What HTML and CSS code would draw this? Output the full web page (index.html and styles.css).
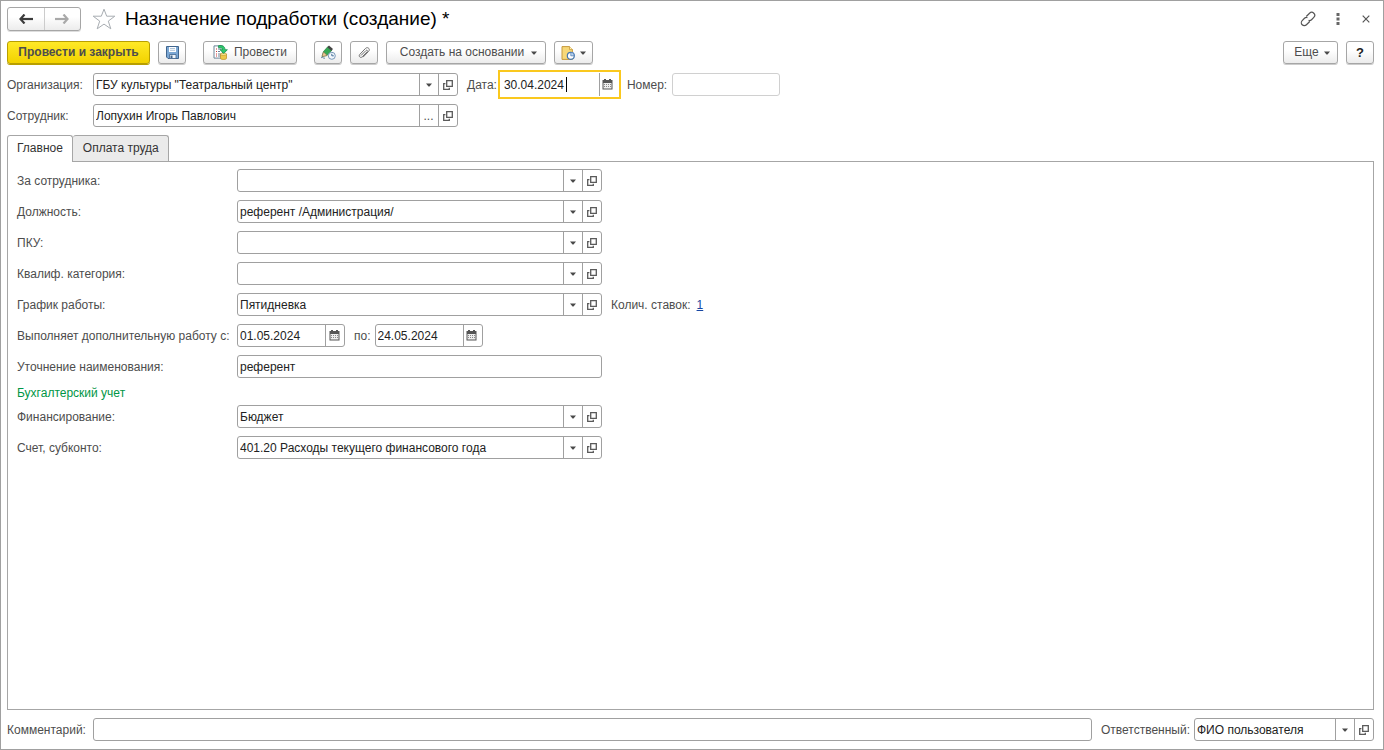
FILE: index.html
```html
<!DOCTYPE html>
<html lang="ru">
<head>
<meta charset="utf-8">
<title>Назначение подработки (создание) *</title>
<link rel="stylesheet" href="styles.css">
</head>
<body>
<svg class="sprite" aria-hidden="true">
  <symbol id="i-down" viewBox="0 0 8 6"><path d="M1 1.500h6L4.500 4.500h-1z" fill="#4a4a4a"/></symbol>
  <symbol id="i-open" viewBox="0 0 10 10"><path d="M3.700.700h5.600v5.600H3.700z" fill="none" stroke="#5a5a5a" stroke-width="1.300"/><path d="M2.400 3.700H.700v5.600h5.600V7.700" fill="none" stroke="#5a5a5a" stroke-width="1.300"/></symbol>
  <symbol id="i-cal" viewBox="0 0 11 11"><path d="M2 0h2v1h3V0h2v1h1.500v9.500H.500V1H2z" fill="#555"/><path d="M1.500 4h8v5.500h-8z" fill="#eee"/><path d="M2 5.500h7M2 7.500h7" stroke="#888" stroke-width="1" stroke-dasharray="1 1"/></symbol>
</svg>
<main class="window">
  <header class="titlebar">
    <div class="history">
      <button type="button" aria-label="Назад"><svg width="14" height="10" viewBox="0 0 14 10"><path d="M14 5H3" fill="none" stroke="#3c3c3c" stroke-width="2.200"/><path d="M5.500.500L1.500 5l4 4.500" fill="none" stroke="#3c3c3c" stroke-width="2.200"/></svg></button>
      <button type="button" aria-label="Вперед"><svg width="14" height="10" viewBox="0 0 14 10"><path d="M0 5H11" fill="none" stroke="#a9a9a9" stroke-width="2.200"/><path d="M8.500.500l4 4.500-4 4.500" fill="none" stroke="#a9a9a9" stroke-width="2.200"/></svg></button>
    </div>
    <button type="button" class="plain star" aria-label="В избранное"><svg width="24" height="22" viewBox="0 0 24 22"><path d="M12 1.200l2.700 7h8.100l-6.500 4.900 2.500 7.700-6.800-4.700-6.800 4.700 2.500-7.700L1.200 8.200h8.100z" fill="#fff" stroke="#a8adb2"/></svg></button>
    <h1>Назначение подработки (создание) *</h1>
    <div class="window-tools">
      <button type="button" class="plain" aria-label="Ссылка"><svg width="16" height="16" viewBox="0 0 16 16"><g transform="rotate(-45 8 8)" fill="none" stroke="#555" stroke-width="1.200"><path d="M7.500 11H2.800a3 3 0 0 1 0-6H6a3 3 0 0 1 2.600 1.600M8.500 5h4.700a3 3 0 0 1 0 6H10a3 3 0 0 1-2.600-1.600"/></g></svg></button>
      <button type="button" class="plain" aria-label="Меню"><svg width="4" height="12" viewBox="0 0 4 12"><path d="M.500 0h3v3h-3zM.500 4.500h3v3h-3zM.500 9h3v3h-3z" fill="#666"/></svg></button>
      <button type="button" class="plain" aria-label="Закрыть"><svg width="8" height="8" viewBox="0 0 8 8"><path d="M.700.700l6.600 6.600M7.300.700L.700 7.300" stroke="#555" stroke-width="1.200"/></svg></button>
    </div>
  </header>

  <div class="toolbar">
    <div class="tools">
      <button type="button" class="btn primary">Провести и закрыть</button>
      <button type="button" class="btn icon" aria-label="Записать"><svg width="13" height="13" viewBox="0 0 13 13"><path d="M.500.500h12v12H2l-1.500-1.500z" fill="#7ba7d4" stroke="#41668f"/><path d="M3 1h7v5H3z" fill="#fff"/><path d="M4 2.500h5M4 4.300h5" stroke="#9bb4ce" stroke-width=".8"/><path d="M3.500 8.500h6.500v4H3.500z" fill="#f1f5f9" stroke="#41668f" stroke-width=".8"/><path d="M4.500 9.500h2v2.500h-2z" fill="#41668f"/></svg></button>
    </div>
    <div class="tools">
      <button type="button" class="btn post"><svg width="15" height="15" viewBox="0 0 15 15"><path d="M1 .900h8.500v12.200H1z" fill="#fff" stroke="#6d8497"/><path d="M3 4h1M3 6.500h1M3 9h1M3 11h1" stroke="#c33"/><path d="M5 4h3M5 6.500h2M5 9h3M5 11h3" stroke="#688096"/><path d="M7.500 9v4.300c0 1.600 6 1.600 6 0V9z" fill="#edc84b" stroke="#b98a1c" stroke-width=".7"/><ellipse cx="10.500" cy="9.200" rx="3" ry="1.200" fill="#fae99a" stroke="#b98a1c" stroke-width=".6"/><path d="M5.500.700c4-.7 6.500.6 6.500 4h2.400L10.700 8.500 7 4.700h2.300C9.200 3 8.200 2.500 5.500 2.700z" fill="#2fc86c" stroke="#118447" stroke-width=".7"/></svg><span>Провести</span></button>
    </div>
    <div class="tools">
      <button type="button" class="btn icon" aria-label="Подписать"><svg width="15" height="15" viewBox="0 0 15 15"><path d="M1 11.500L2.500 6.500 7 1.500 11 5 6 10.500z" fill="#35a854" stroke="#267e3e" stroke-width=".7"/><path d="M1 11.500L2.500 7l3.700 3.500z" fill="#f1c897" stroke="#866244" stroke-width=".5"/><path d="M6.300 2.200L8 .500 12 4l-1.600 1.800z" fill="#454545"/><path d="M0 13c2-2 2 1 4 0" fill="none" stroke="#4f7698"/><circle cx="10.800" cy="10.800" r="3.500" fill="#f3f8fd" stroke="#7798b8"/><path d="M10.800 8.800v2h2" fill="none" stroke="#446f99"/></svg></button>
      <button type="button" class="btn icon" aria-label="Присоединенные файлы"><svg width="14" height="14" viewBox="0 0 14 14"><path d="M4 9.500l5-5c1-1 2 .3 1.200 1.200L5.300 10.800c-1.700 1.700-4.200-.5-2.500-2.400l5.600-5.900c2.300-2.300 5.300.7 3.200 2.900L6 11.200" fill="none" stroke="#707070" stroke-width="1"/></svg></button>
      <button type="button" class="btn create"><span>Создать на основании</span><svg width="8" height="6"><use href="#i-down"/></svg></button>
      <button type="button" class="btn report" aria-label="Отчеты"><svg width="14" height="14" viewBox="0 0 14 14"><path d="M1 .600h7.500L11.400 3.500v9.900H1z" fill="#f7d878" stroke="#c69a3e"/><path d="M8.500.600v3h3" fill="#fff0b9" stroke="#c69a3e" stroke-width=".8"/><circle cx="9.800" cy="9.800" r="3.500" fill="#fff" stroke="#4777ad" stroke-width="1.200"/><path d="M9.800 9.800V6.300a3.500 3.500 0 0 1 3.500 3.500z" fill="#b9d4f1" stroke="#4777ad" stroke-width=".7"/></svg><svg width="8" height="6"><use href="#i-down"/></svg></button>
    </div>
    <div class="tools end">
      <button type="button" class="btn more"><span>Еще</span><svg width="8" height="6"><use href="#i-down"/></svg></button>
      <button type="button" class="btn icon help">?</button>
    </div>
  </div>

  <div class="head-row first">
    <label class="head-label" for="org">Организация:</label>
    <div class="field wide"><input id="org" value='ГБУ культуры "Театральный центр"'><button type="button" aria-label="Выбрать"><svg width="8" height="6"><use href="#i-down"/></svg></button><button type="button" aria-label="Открыть"><svg width="10" height="10"><use href="#i-open"/></svg></button></div>
    <label class="date-label" for="date">Дата:</label>
    <div class="field active"><span class="entry"><input id="date" value="30.04.2024"><i class="caret"></i></span><button type="button" aria-label="Календарь"><svg width="11" height="11"><use href="#i-cal"/></svg></button></div>
    <label class="number-label" for="number">Номер:</label>
    <div class="field date disabled"><input id="number" disabled></div>
  </div>
  <div class="head-row">
    <label class="head-label" for="emp">Сотрудник:</label>
    <div class="field wide"><input id="emp" value="Лопухин Игорь Павлович"><button type="button" class="dots" aria-label="Выбрать">...</button><button type="button" aria-label="Открыть"><svg width="10" height="10"><use href="#i-open"/></svg></button></div>
  </div>

  <div class="tabs" role="tablist">
    <button type="button" role="tab" aria-selected="true" class="tab selected">Главное</button>
    <button type="button" role="tab" aria-selected="false" class="tab">Оплата труда</button>
  </div>
  <section class="panel" role="tabpanel">
    <div class="row"><label for="f1">За сотрудника:</label><div class="field wide"><input id="f1"><button type="button" aria-label="Выбрать"><svg width="8" height="6"><use href="#i-down"/></svg></button><button type="button" aria-label="Открыть"><svg width="10" height="10"><use href="#i-open"/></svg></button></div></div>
    <div class="row"><label for="f2">Должность:</label><div class="field wide"><input id="f2" value="референт /Администрация/"><button type="button" aria-label="Выбрать"><svg width="8" height="6"><use href="#i-down"/></svg></button><button type="button" aria-label="Открыть"><svg width="10" height="10"><use href="#i-open"/></svg></button></div></div>
    <div class="row"><label for="f3">ПКУ:</label><div class="field wide"><input id="f3"><button type="button" aria-label="Выбрать"><svg width="8" height="6"><use href="#i-down"/></svg></button><button type="button" aria-label="Открыть"><svg width="10" height="10"><use href="#i-open"/></svg></button></div></div>
    <div class="row"><label for="f4">Квалиф. категория:</label><div class="field wide"><input id="f4"><button type="button" aria-label="Выбрать"><svg width="8" height="6"><use href="#i-down"/></svg></button><button type="button" aria-label="Открыть"><svg width="10" height="10"><use href="#i-open"/></svg></button></div></div>
    <div class="row"><label for="f5">График работы:</label><div class="field wide"><input id="f5" value="Пятидневка"><button type="button" aria-label="Выбрать"><svg width="8" height="6"><use href="#i-down"/></svg></button><button type="button" aria-label="Открыть"><svg width="10" height="10"><use href="#i-open"/></svg></button></div><span class="aside">Колич. ставок:</span><a class="rate" href="#">1</a></div>
    <div class="row"><label for="f6">Выполняет дополнительную работу с:</label><div class="field date"><input id="f6" value="01.05.2024"><button type="button" aria-label="Календарь"><svg width="11" height="11"><use href="#i-cal"/></svg></button></div><label class="to" for="f7">по:</label><div class="field date"><input id="f7" value="24.05.2024"><button type="button" aria-label="Календарь"><svg width="11" height="11"><use href="#i-cal"/></svg></button></div></div>
    <div class="row"><label for="f8">Уточнение наименования:</label><div class="field wide"><input id="f8" value="референт"></div></div>
    <div class="group">
      <h2>Бухгалтерский учет</h2>
      <div class="row"><label for="f9">Финансирование:</label><div class="field wide"><input id="f9" value="Бюджет"><button type="button" aria-label="Выбрать"><svg width="8" height="6"><use href="#i-down"/></svg></button><button type="button" aria-label="Открыть"><svg width="10" height="10"><use href="#i-open"/></svg></button></div></div>
      <div class="row"><label for="f10">Счет, субконто:</label><div class="field wide"><input id="f10" value="401.20 Расходы текущего финансового года"><button type="button" aria-label="Выбрать"><svg width="8" height="6"><use href="#i-down"/></svg></button><button type="button" aria-label="Открыть"><svg width="10" height="10"><use href="#i-open"/></svg></button></div></div>
    </div>
  </section>

  <footer class="footer">
    <label class="head-label" for="comment">Комментарий:</label>
    <div class="field grow"><input id="comment"></div>
    <label class="resp-label" for="resp">Ответственный:</label>
    <div class="field resp"><input id="resp" value="ФИО пользователя"><button type="button" aria-label="Выбрать"><svg width="8" height="6"><use href="#i-down"/></svg></button><button type="button" aria-label="Открыть"><svg width="10" height="10"><use href="#i-open"/></svg></button></div>
  </footer>
</main>
</body>
</html>
```

FILE: styles.css
```css
* { box-sizing: border-box; }
body {
  margin: 0;
  font: 12px/15px "Liberation Sans", Arial, sans-serif;
  color: #4d4d4d;
  background: #fff;
}
button, input { font: inherit; color: inherit; margin: 0; }
button { padding: 0; cursor: pointer; }
svg { flex: none; display: block; }
label, .aside { white-space: nowrap; }
.sprite { position: absolute; width: 0; height: 0; }

.window {
  min-height: 100vh;
  display: flex;
  flex-direction: column;
  padding: 6px 9px 8px 6px;
  border: 1px solid #a0a0a0;
}

.titlebar { display: flex; align-items: center; height: 24px; }
.history {
  display: flex;
  width: 74px;
  height: 24px;
  border: 1px solid #a6a6a6;
  border-radius: 3px;
  background: linear-gradient(#fff 40%, #ececec);
  box-shadow: 0 1px 0 #ddd;
}
.history button {
  flex: 1;
  display: grid;
  place-items: center;
  border: 0;
  background: none;
}
.history button + button { border-left: 1px solid #ccc; }
.plain { display: grid; place-items: center; border: 0; background: none; }
.star { margin: 0 9px 0 11px; }
h1 { margin: 0; font-size: 19px; line-height: 24px; font-weight: 400; color: #000; }
.window-tools { display: flex; align-items: center; gap: 22px; margin-left: auto; padding-right: 4px; }
.window-tools .plain:nth-child(2) { margin-left: -2px; }

.toolbar { display: flex; gap: 17px; padding-top: 10px; }
.tools { display: flex; gap: 8px; }
.end { margin-left: auto; }
.btn {
  display: flex;
  align-items: center;
  justify-content: center;
  height: 23px;
  border: 1px solid #a6a6a6;
  border-radius: 3px;
  background: linear-gradient(#fff 40%, #ececec);
  box-shadow: 0 1px 0 #ccc;
  white-space: nowrap;
}
.primary {
  width: 143px;
  border-color: #b89f00;
  background: linear-gradient(#ffe927, #f2d200);
  box-shadow: 0 1px 0 #b89f00;
  font-weight: 700;
}
.icon { width: 28px; }
.post { width: 94px; gap: 6px; }
.create { width: 160px; gap: 6px; padding-left: 6px; }
.report { width: 39px; gap: 4px; }
.more { width: 55px; gap: 4px; padding-left: 4px; }
.help { font-size: 13px; font-weight: 700; color: #222; }

.head-row { display: flex; align-items: center; padding-top: 5px; }
.head-row.first { padding-top: 6px; }
.head-label { width: 86px; }
.field {
  display: flex;
  height: 23px;
  border: 1px solid #a0a0a0;
  border-radius: 3px;
  background: #fff;
  color: #222;
}
.field input {
  flex: 1;
  min-width: 0;
  width: 100%;
  padding: 1px 0 0 2px;
  border: 0;
  outline: 0;
  background: none;
}
.field button {
  flex: none;
  width: 19px;
  display: grid;
  place-items: center;
  padding-right: 1px;
  border: 0;
  border-left: 1px solid #a0a0a0;
  background: none;
}
.field button:last-child { padding-right: 0; }
.field .dots { padding-top: 2px; color: #4d4d4d; }
.wide { width: 365px; }
.date { width: 108px; }
.disabled { border-color: #d0d0d0; }
.date-label { padding: 0 1px 0 9px; }
.active {
  width: 123px;
  height: 29px;
  padding: 1px;
  border: 2px solid #fac81e;
  border-radius: 0;
}
.active button, .date button { padding-right: 2px; }
.field.active button:last-child, .field.date button:last-child { padding-right: 2px; }
.entry { position: relative; display: flex; flex: 1; }
.active input { padding-left: 3px; }
.caret { position: absolute; left: 65px; top: 4px; width: 1px; height: 15px; background: #000; }
.number-label { padding: 0 5px 0 6px; }

.tabs { display: flex; padding-top: 8px; }
.tab {
  height: 26px;
  padding: 0 9px;
  border: 1px solid #a6a6a6;
  border-bottom: 0;
  border-radius: 3px 3px 0 0;
  background: #ebebeb;
  color: #333;
}
.tab + .tab { border-left: 0; padding-left: 10px; }
.tab.selected { position: relative; height: 27px; margin-bottom: -1px; padding-bottom: 2px; background: #fff; }

.panel {
  flex: 1;
  display: flex;
  flex-direction: column;
  gap: 8px;
  padding: 7px 9px;
  border: 1px solid #a6a6a6;
}
.row { display: flex; align-items: center; }
.row > label, .aside, .rate, .head-row > label, .footer > label { padding-top: 1px; }
.row > label:first-child { width: 220px; }
.aside { padding-left: 9px; padding-right: 6px; }
.rate { color: #1746a2; }
.row .to { padding-left: 9px; padding-right: 4px; }
.group { display: flex; flex-direction: column; gap: 8px; }
h2 { margin: 0 0 -4px; font-size: 12px; line-height: 15px; font-weight: 400; color: #009646; }

.footer { display: flex; align-items: center; padding-top: 8px; }
.resp-label { padding-left: 9px; padding-right: 4px; }
.grow { flex: 1; }
.resp { width: 180px; }
```
